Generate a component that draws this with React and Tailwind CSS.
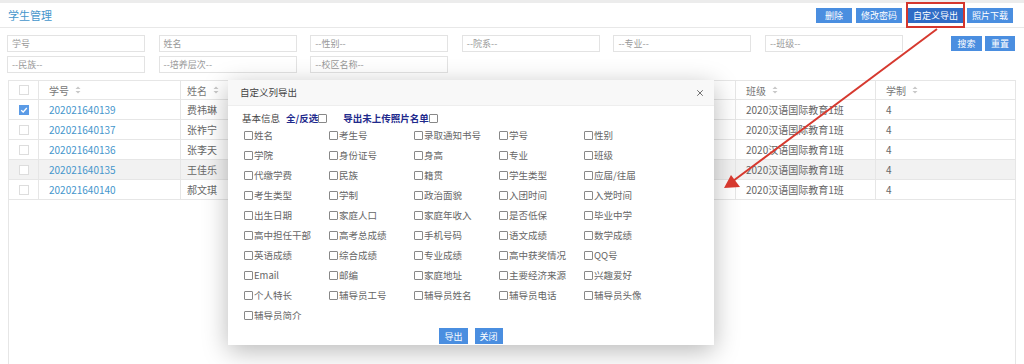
import { X } from "lucide-react";

const filters1 = ["学号", "姓名", "--性别--", "--院系--", "--专业--", "--班级--"];
const filters2 = ["--民族--", "--培养层次--", "--校区名称--"];

const rows = [
  { id: "202021640139", name: "费祎琳", checked: true },
  { id: "202021640137", name: "张祚宁" },
  { id: "202021640136", name: "张李天" },
  { id: "202021640135", name: "王佳乐", hover: true },
  { id: "202021640140", name: "郝文琪" },
];

const fields = [
  ["姓名", "考生号", "录取通知书号", "学号", "性别"],
  ["学院", "身份证号", "身高", "专业", "班级"],
  ["代缴学费", "民族", "籍贯", "学生类型", "应届/往届"],
  ["考生类型", "学制", "政治面貌", "入团时间", "入党时间"],
  ["出生日期", "家庭人口", "家庭年收入", "是否低保", "毕业中学"],
  ["高中担任干部", "高考总成绩", "手机号码", "语文成绩", "数学成绩"],
  ["英语成绩", "综合成绩", "专业成绩", "高中获奖情况", "QQ号"],
  ["Email", "邮编", "家庭地址", "主要经济来源", "兴趣爱好"],
  ["个人特长", "辅导员工号", "辅导员姓名", "辅导员电话", "辅导员头像"],
  ["辅导员简介"],
];

function Sort() {
  return (
    <svg className="w-[6px] h-[8px] ml-[6px]" viewBox="0 0 6 8">
      <path d="M3 0.5L5.5 3H0.5z" fill="#c8c8c8" />
      <path d="M3 7.5L5.5 5H0.5z" fill="#c8c8c8" />
    </svg>
  );
}

function Box() {
  return <span className="inline-block w-[9px] h-[9px] border border-[#888] rounded-[1px] bg-white shrink-0" />;
}

export default function App() {
  return (
    <div className="relative w-[1024px] h-[364px] overflow-hidden bg-white font-['Noto_Sans_CJK_SC',sans-serif] text-[10px] text-[#666]">
      <div className="h-[3px] bg-[#ececec]" />

      {/* header */}
      <div className="h-[25px] flex items-center justify-between pl-[8px] pr-[11px] border-b border-[#e8e8e8]">
        <div className="text-[11px] text-[#4596cc]">学生管理</div>
        <div className="flex items-center">
          <button className="h-[15px] px-[9px] bg-[#4a8ee0] text-white text-[9px] leading-none">删除</button>
          <button className="ml-[4px] h-[15px] px-[5px] bg-[#4a8ee0] text-white text-[9px] leading-none">修改密码</button>
          <div className="ml-[4px] border-2 border-[#d4362d] py-[3px] px-0">
            <button className="h-[15px] px-[5px] bg-[#2f6cc6] text-white text-[9px] leading-none">自定义导出</button>
          </div>
          <button className="ml-[2px] h-[15px] px-[5px] bg-[#4a8ee0] text-white text-[9px] leading-none">照片下载</button>
        </div>
      </div>

      {/* filters */}
      <div className="flex justify-between pl-[7px] pr-[9px] pt-[7px]">
        <div className="flex flex-col gap-[4px]">
          <div className="grid grid-cols-[repeat(6,138px)] gap-x-[13.6px]">
            {filters1.map((f) => (
              <div key={f} className="h-[17px] border border-[#e3e3e3] px-[4px] flex items-center text-[9px] text-[#999]">{f}</div>
            ))}
          </div>
          <div className="grid grid-cols-[repeat(6,138px)] gap-x-[13.6px]">
            {filters2.map((f) => (
              <div key={f} className="h-[17px] border border-[#e3e3e3] px-[4px] flex items-center text-[9px] text-[#999]">{f}</div>
            ))}
          </div>
        </div>
        <div className="flex gap-[3px] pt-[1px]">
          <button className="h-[15px] w-[31px] bg-[#4a8ee0] text-white text-[9px] leading-none">搜索</button>
          <button className="h-[15px] w-[30px] bg-[#4a8ee0] text-white text-[9px] leading-none">重置</button>
        </div>
      </div>

      {/* table */}
      <div className="mx-[8px] mt-[7px] w-[1008px] h-[300px] border border-[#e6e6e6]">
        <div className="grid grid-cols-[30px_142px_140px_140px_140px_135px_140px_1fr] h-[19px] border-b border-[#e6e6e6] text-[#777]">
          <div className="flex items-center justify-center border-r border-[#e6e6e6]">
            <span className="w-[10px] h-[10px] border border-[#ddd] bg-white" />
          </div>
          <div className="flex items-center pl-[10px] border-r border-[#e6e6e6]">学号<Sort /></div>
          <div className="flex items-center pl-[6px] border-r border-[#e6e6e6]">姓名<Sort /></div>
          <div className="border-r border-[#e6e6e6]" />
          <div className="border-r border-[#e6e6e6]" />
          <div className="border-r border-[#e6e6e6]" />
          <div className="flex items-center pl-[10px] border-r border-[#e6e6e6]">班级<Sort /></div>
          <div className="flex items-center pl-[10px]">学制<Sort /></div>
        </div>
        {rows.map((r) => (
          <div key={r.id} className={`grid grid-cols-[30px_142px_140px_140px_140px_135px_140px_1fr] h-[20px] border-b border-[#e6e6e6] ${r.hover ? "bg-[#f2f2f2]" : "bg-white"}`}>
            <div className="flex items-center justify-center border-r border-[#e6e6e6]">
              {r.checked ? (
                <span className="w-[10px] h-[10px] bg-[#5b9be6] flex items-center justify-center">
                  <svg className="w-[8px] h-[8px]" viewBox="0 0 8 8"><path d="M1.2 4.2L3.2 6L6.8 2" fill="none" stroke="white" strokeWidth="1.3" /></svg>
                </span>
              ) : (
                <span className="w-[10px] h-[10px] border border-[#ddd] bg-white" />
              )}
            </div>
            <div className="flex items-center pl-[10px] border-r border-[#e6e6e6] text-[#4596cc]">{r.id}</div>
            <div className="flex items-center pl-[6px] border-r border-[#e6e6e6]">{r.name}</div>
            <div className="border-r border-[#e6e6e6]" />
            <div className="border-r border-[#e6e6e6]" />
            <div className="border-r border-[#e6e6e6]" />
            <div className="flex items-center pl-[10px] border-r border-[#e6e6e6]">2020汉语国际教育1班</div>
            <div className="flex items-center pl-[10px]">4</div>
          </div>
        ))}
      </div>

      {/* modal */}
      <div className="absolute left-[228px] top-[80px] w-[486px] h-[265px] bg-white shadow-[0_6px_24px_rgba(0,0,0,0.28)]">
        <div className="h-[26px] bg-[#f8f8f8] border-b border-[#eee] flex items-center justify-between pl-[12px] pr-[9px]">
          <span className="text-[#444] text-[9.5px]">自定义列导出</span>
          <X className="w-[10px] h-[10px] text-[#555]" strokeWidth={2} />
        </div>
        <div className="pl-[14px] pt-[5px]">
          <div className="flex items-center h-[14px] text-[9.5px]">
            <span className="text-[#444]">基本信息</span>
            <span className="ml-[6px] font-bold text-[#1f2a8c]">全/反选</span>
            <Box />
            <span className="ml-[16px] font-bold text-[#1f2a8c]">导出未上传照片名单</span>
            <Box />
          </div>
          <div className="pl-[2px]">
            {fields.map((row, i) => (
              <div key={i} className="grid grid-cols-[repeat(5,85px)] h-[20px]">
                {row.map((f) => (
                  <div key={f} className="flex items-center gap-[1px] text-[9.5px] text-[#666]">
                    <Box />
                    <span>{f}</span>
                  </div>
                ))}
              </div>
            ))}
          </div>
        </div>
        <div className="flex justify-center gap-[7px] mt-[3px]">
          <button className="h-[16px] px-[5px] bg-[#4a8ee0] text-white text-[9px] leading-none">导出</button>
          <button className="h-[16px] px-[5px] bg-[#4a8ee0] text-white text-[9px] leading-none">关闭</button>
        </div>
      </div>

      {/* red annotation arrow */}
      <svg className="absolute left-0 top-0 w-[1024px] h-[364px] pointer-events-none" viewBox="0 0 1024 364">
        <line x1="937" y1="29" x2="733" y2="181" stroke="#d6392f" strokeWidth="2" />
        <path d="M724 188L731 175L740 187Z" fill="#d6392f" />
      </svg>
    </div>
  );
}
